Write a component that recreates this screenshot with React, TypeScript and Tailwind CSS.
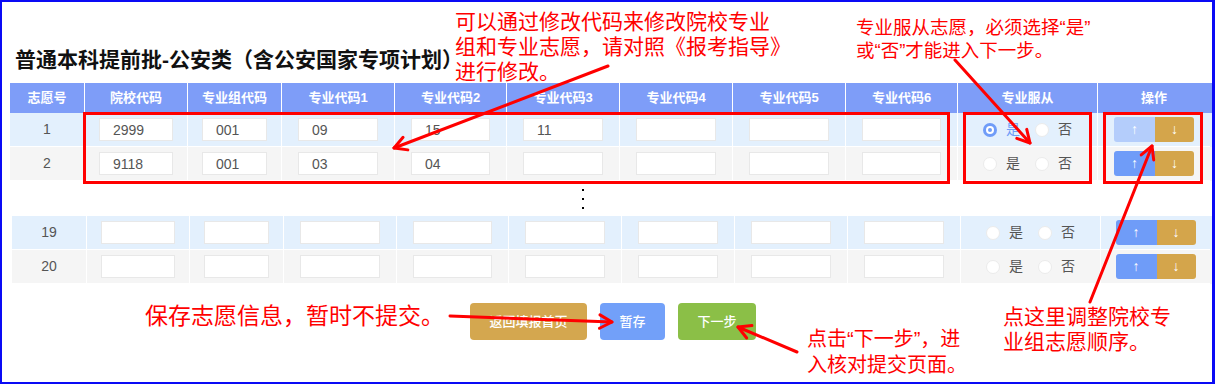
import React from "react";

const font = { fontFamily: '"Liberation Sans", "Noto Sans CJK SC", sans-serif' };

const topGrid =
  "grid grid-cols-[75px_103px_94px_113px_112px_113px_113px_113px_112px_140px_112px]";
const lowGrid =
  "grid grid-cols-[75px_103px_94px_113px_112px_113px_113px_113px_113px_140px_109px]";

const headers = [
  "志愿号",
  "院校代码",
  "专业组代码",
  "专业代码1",
  "专业代码2",
  "专业代码3",
  "专业代码4",
  "专业代码5",
  "专业代码6",
  "专业服从",
  "操作",
];

type RowData = {
  no: string;
  codes: string[];
  choice?: "yes" | "no";
  upDisabled?: boolean;
  tint: "blue" | "gray";
};

function Radio({ checked }: { checked?: boolean }) {
  if (checked) {
    return (
      <span className="flex h-[14px] w-[14px] items-center justify-center rounded-full bg-[#6f9cf8]">
        <span className="flex h-[8px] w-[8px] items-center justify-center rounded-full bg-white">
          <span className="h-[4px] w-[4px] rounded-full bg-[#6f9cf8]" />
        </span>
      </span>
    );
  }
  return <span className="h-[14px] w-[14px] rounded-full border border-[#ebebeb] bg-white" />;
}

function CodeInput({ value }: { value: string }) {
  return (
    <input
      readOnly
      value={value}
      className="h-[23px] w-full border border-[#e8e8e8] bg-white pl-[13px] text-[14px] text-[#555] outline-none"
      style={font}
    />
  );
}

function Row({ row, grid }: { row: RowData; grid: string }) {
  const bg = row.tint === "blue" ? "bg-[#e3f0fd]" : "bg-[#f5f5f5]";
  const cell = "flex h-[34px] items-center border-r border-b border-white";
  return (
    <div className={`${grid} ${bg}`}>
      <div className={`${cell} justify-center text-[14px] text-[#555]`}>{row.no}</div>
      <div className={`${cell} px-[14px]`}>
        <CodeInput value={row.codes[0]} />
      </div>
      <div className={`${cell} px-[14px]`}>
        <CodeInput value={row.codes[1]} />
      </div>
      {row.codes.slice(2).map((c, i) => (
        <div key={i} className={`${cell} px-[16px]`}>
          <CodeInput value={c} />
        </div>
      ))}
      <div className={`${cell} justify-center text-[14px]`}>
        <Radio checked={row.choice === "yes"} />
        <span className={`ml-[9px] ${row.choice === "yes" ? "text-[#6f9cf8]" : "text-[#555]"}`}>是</span>
        <span className="ml-[15px]" />
        <Radio checked={row.choice === "no"} />
        <span className={`ml-[9px] ${row.choice === "no" ? "text-[#6f9cf8]" : "text-[#555]"}`}>否</span>
      </div>
      <div className="flex h-[34px] items-center justify-center border-b border-white">
        <div className="flex h-[25px] w-[80px] overflow-hidden rounded-[3px] text-[14px] text-white">
          <div
            className={`flex w-[41px] items-center justify-center ${
              row.upDisabled ? "bg-[#b4cdfb]" : "bg-[#6f9cf8]"
            }`}
          >
            ↑
          </div>
          <div className="flex flex-1 items-center justify-center bg-[#d4a54b]">↓</div>
        </div>
      </div>
    </div>
  );
}

function Arrow({ x1, y1, x2, y2 }: { x1: number; y1: number; x2: number; y2: number }) {
  const a = Math.atan2(y1 - y2, x1 - x2);
  const len = 14;
  const s = 0.5;
  const p1 = `${x2 + len * Math.cos(a + s)},${y2 + len * Math.sin(a + s)}`;
  const p2 = `${x2 + len * Math.cos(a - s)},${y2 + len * Math.sin(a - s)}`;
  return (
    <g stroke="#ff0000" strokeWidth="3" fill="none" strokeLinecap="round" strokeLinejoin="round">
      <line x1={x1} y1={y1} x2={x2} y2={y2} />
      <polyline points={`${p1} ${x2},${y2} ${p2}`} />
    </g>
  );
}

const topRows: RowData[] = [
  { no: "1", codes: ["2999", "001", "09", "15", "11", "", "", ""], choice: "yes", upDisabled: true, tint: "blue" },
  { no: "2", codes: ["9118", "001", "03", "04", "", "", "", ""], tint: "gray" },
];

const lowRows: RowData[] = [
  { no: "19", codes: ["", "", "", "", "", "", "", ""], tint: "blue" },
  { no: "20", codes: ["", "", "", "", "", "", "", ""], tint: "gray" },
];

export default function App() {
  return (
    <div
      className="relative h-[384px] w-[1215px] overflow-hidden border-2 border-r-[3px] border-[#0a0af5] bg-white"
      style={font}
    >
      <div className="pl-[8px]">
        {/* Title */}
        <h1 className="mt-[44px] pl-[5px] text-[21px] font-bold leading-[28px] text-[#111]">
          普通本科提前批-公安类（含公安国家专项计划）
        </h1>

        {/* Header */}
        <div className={`${topGrid} mt-[9px] bg-[#7e9df8]`}>
          {headers.map((h, i) => (
            <div
              key={h}
              className={`flex h-[30px] items-center justify-center text-[13px] font-bold text-white ${
                i < headers.length - 1 ? "border-r border-white" : ""
              }`}
            >
              {h}
            </div>
          ))}
        </div>
        {topRows.map((r) => (
          <Row key={r.no} row={r} grid={topGrid} />
        ))}

        {/* Ellipsis */}
        <div className="flex h-[35px] flex-col gap-[7px] pl-[572px] pt-[8px]">
          <span className="h-[2px] w-[2px] bg-black" />
          <span className="h-[2px] w-[2px] bg-black" />
          <span className="h-[2px] w-[2px] bg-black" />
        </div>

        <div className="pl-[2px]">
          {lowRows.map((r) => (
            <Row key={r.no} row={r} grid={lowGrid} />
          ))}
        </div>

        {/* Buttons */}
        <div className="mt-[19px] flex gap-[13px] pl-[460px] text-[13px] font-medium text-white">
          <button className="h-[37px] w-[117px] rounded-[4px] bg-[#d4a74f]">返回填报首页</button>
          <button className="h-[37px] w-[65px] rounded-[4px] bg-[#72a0f9]">暂存</button>
          <button className="h-[37px] w-[78px] rounded-[4px] bg-[#8bbf47]">下一步</button>
        </div>
      </div>

      {/* Annotation layer */}
      <div className="pointer-events-none absolute -left-[2px] -top-[2px] h-[384px] w-[1215px] text-[#ff0000]">
        <div className="absolute left-[83px] top-[112px] h-[72px] w-[867px] border-[3px] border-[#ff0000]" />
        <div className="absolute left-[963px] top-[112px] h-[72px] w-[129px] border-[3px] border-[#ff0000]" />
        <div className="absolute left-[1103px] top-[112px] h-[72px] w-[100px] border-[3px] border-[#ff0000]" />

        <div className="absolute left-[455px] top-[9px] whitespace-nowrap text-[21px] leading-[25px]">
          可以通过修改代码来修改院校专业
          <br />
          组和专业志愿，请对照《报考指导》
          <br />
          进行修改。
        </div>
        <div className="absolute left-[856px] top-[16px] whitespace-nowrap text-[18.5px] leading-[23px]">
          专业服从志愿，必须选择“是”
          <br />
          或“否”才能进入下一步。
        </div>
        <div className="absolute left-[145px] top-[302px] whitespace-nowrap text-[23px] leading-[28px]">
          保存志愿信息，暂时不提交。
        </div>
        <div className="absolute left-[807px] top-[326px] whitespace-nowrap text-[20px] leading-[26px]">
          点击“下一步”，进
          <br />
          入核对提交页面。
        </div>
        <div className="absolute left-[1003px] top-[304px] whitespace-nowrap text-[21px] leading-[25px]">
          点这里调整院校专
          <br />
          业组志愿顺序。
        </div>

        <svg className="absolute left-0 top-0" width="1215" height="384" viewBox="0 0 1215 384">
          <Arrow x1={608} y1={66} x2={394} y2={148} />
          <Arrow x1={955} y1={60} x2={1030} y2={143} />
          <Arrow x1={1090} y1={302} x2={1152} y2={146} />
          <Arrow x1={450} y1={316} x2={612} y2={322} />
          <Arrow x1={797} y1={352} x2={738} y2={327} />
        </svg>
      </div>
    </div>
  );
}
